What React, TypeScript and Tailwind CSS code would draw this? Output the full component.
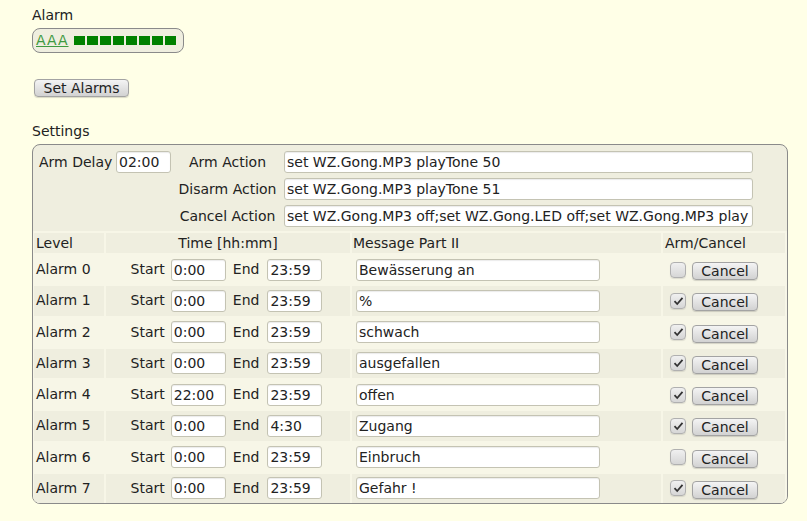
import { useState } from 'react'

interface AlarmRow {
  level: string
  start: string
  end: string
  msg: string
  armed: boolean
}

const alarms: AlarmRow[] = [
  { level: 'Alarm 0', start: '0:00', end: '23:59', msg: 'Bewässerung an', armed: false },
  { level: 'Alarm 1', start: '0:00', end: '23:59', msg: '%', armed: true },
  { level: 'Alarm 2', start: '0:00', end: '23:59', msg: 'schwach', armed: true },
  { level: 'Alarm 3', start: '0:00', end: '23:59', msg: 'ausgefallen', armed: true },
  { level: 'Alarm 4', start: '22:00', end: '23:59', msg: 'offen', armed: true },
  { level: 'Alarm 5', start: '0:00', end: '4:30', msg: 'Zugang', armed: true },
  { level: 'Alarm 6', start: '0:00', end: '23:59', msg: 'Einbruch', armed: false },
  { level: 'Alarm 7', start: '0:00', end: '23:59', msg: 'Gefahr !', armed: true },
]

function TextInput({ value, width }: { value: string; width: string }) {
  return (
    <input
      type="text"
      defaultValue={value}
      className={`${width} h-[22px] shrink-0 rounded-[3px] border border-[#c4c3b3] bg-white pl-[2px] pr-[1px] text-[14px] text-[#222] shadow-[inset_0_1px_1px_rgba(0,0,0,0.08)] outline-none`}
    />
  )
}

function Btn({ label, width }: { label: string; width: string }) {
  return (
    <button
      className={`${width} h-[18px] rounded-[4px] border border-[#a3a3a3] bg-gradient-to-b from-[#f4f4f4] to-[#d2d2d2] text-[14px] leading-[16px] text-[#222] shadow-[0_1px_1px_rgba(0,0,0,0.15)]`}
    >
      {label}
    </button>
  )
}

function Check({ initial }: { initial: boolean }) {
  const [on, setOn] = useState(initial)
  return (
    <button
      onClick={() => setOn(!on)}
      className="w-[16px] h-[16px] rounded-[4px] border border-[#b0b0b0] bg-gradient-to-b from-[#f0f0f0] to-[#d6d6d6] flex items-center justify-center shadow-[0_1px_1px_rgba(0,0,0,0.1)]"
    >
      {on && (
        <svg width="11" height="10" viewBox="0 0 11 10">
          <path d="M1.5 5.2 L4.2 8 L9.5 1.8" fill="none" stroke="#333" strokeWidth="1.8" />
        </svg>
      )}
    </button>
  )
}

export default function App() {
  return (
    <div className="min-h-screen bg-[#ffffe7] pl-[32px] pt-[7px] font-['DejaVu_Sans',sans-serif] text-[14px] leading-[17px] text-[#222]">
      <div>Alarm</div>

      <div className="mt-[4px] flex h-[25px] w-[152px] items-center rounded-[8px] border border-[#8a8a8a] bg-[#efeedf] pl-[3px]">
        <a href="#" className="text-[14px] tracking-[1px] text-[#3f9a3f] underline">
          AAA
        </a>
        <div className="ml-[5px] flex gap-[2px]">
          {Array.from({ length: 8 }).map((_, i) => (
            <span key={i} className="block w-[11px] h-[9px] bg-[#008000]" />
          ))}
        </div>
      </div>

      <div className="mt-[26px] ml-[2px]">
        <Btn label="Set Alarms" width="w-[95px]" />
      </div>

      <div className="mt-[26px]">Settings</div>

      <div className="mt-[4px] w-[756px] overflow-hidden rounded-[8px] border border-[#8a8a8a] bg-[#efeedf]">
        <div className="grid grid-cols-[77px_55px_113px_469px] gap-y-[5px] pl-[6px] pt-[6px]">
          <div className="flex items-center">Arm Delay</div>
          <TextInput value="02:00" width="w-[55px]" />
          <div className="flex items-center justify-center">Arm Action</div>
          <TextInput value="set WZ.Gong.MP3 playTone 50" width="w-[469px]" />

          <div />
          <div />
          <div className="flex items-center justify-center">Disarm Action</div>
          <TextInput value="set WZ.Gong.MP3 playTone 51" width="w-[469px]" />

          <div />
          <div />
          <div className="flex items-center justify-center">Cancel Action</div>
          <TextInput
            value="set WZ.Gong.MP3 off;set WZ.Gong.LED off;set WZ.Gong.MP3 play"
            width="w-[469px]"
          />
        </div>

        <div className="mt-[4px] grid grid-cols-[70px_244px_309px_122px] gap-[2px] bg-[#f7f6e7] px-[1px] pt-[2px]">
          <div className="flex h-[20px] items-center bg-[#efeedf] pl-[2px]">Level</div>
          <div className="flex h-[20px] items-center justify-center bg-[#efeedf]">Time [hh:mm]</div>
          <div className="flex h-[20px] items-center bg-[#efeedf] pl-[1px]">Message Part II</div>
          <div className="flex h-[20px] items-center bg-[#efeedf] pl-[2px]">Arm/Cancel</div>

          {alarms.map((a, i) => {
            const bg = i % 2 === 1 ? 'bg-[#efeedf]' : 'bg-[#f7f6e7]'
            return [
              <div key={a.level + 'l'} className={`flex h-[29.25px] items-center pl-[2px] ${bg}`}>
                {a.level}
              </div>,
              <div key={a.level + 't'} className={`flex items-center justify-center pr-[3px] ${bg}`}>
                <span className="mr-[6px]">Start</span>
                <TextInput value={a.start} width="w-[55px]" />
                <span className="ml-[7px] mr-[8px]">End</span>
                <TextInput value={a.end} width="w-[55px]" />
              </div>,
              <div key={a.level + 'm'} className={`flex items-center pl-[4px] ${bg}`}>
                <TextInput value={a.msg} width="w-[244px]" />
              </div>,
              <div key={a.level + 'a'} className={`flex items-center pl-[7px] ${bg}`}>
                <Check initial={a.armed} />
                <div className="ml-[6px] mt-[3px]">
                  <Btn label="Cancel" width="w-[66px]" />
                </div>
              </div>,
            ]
          })}
        </div>
      </div>
    </div>
  )
}
